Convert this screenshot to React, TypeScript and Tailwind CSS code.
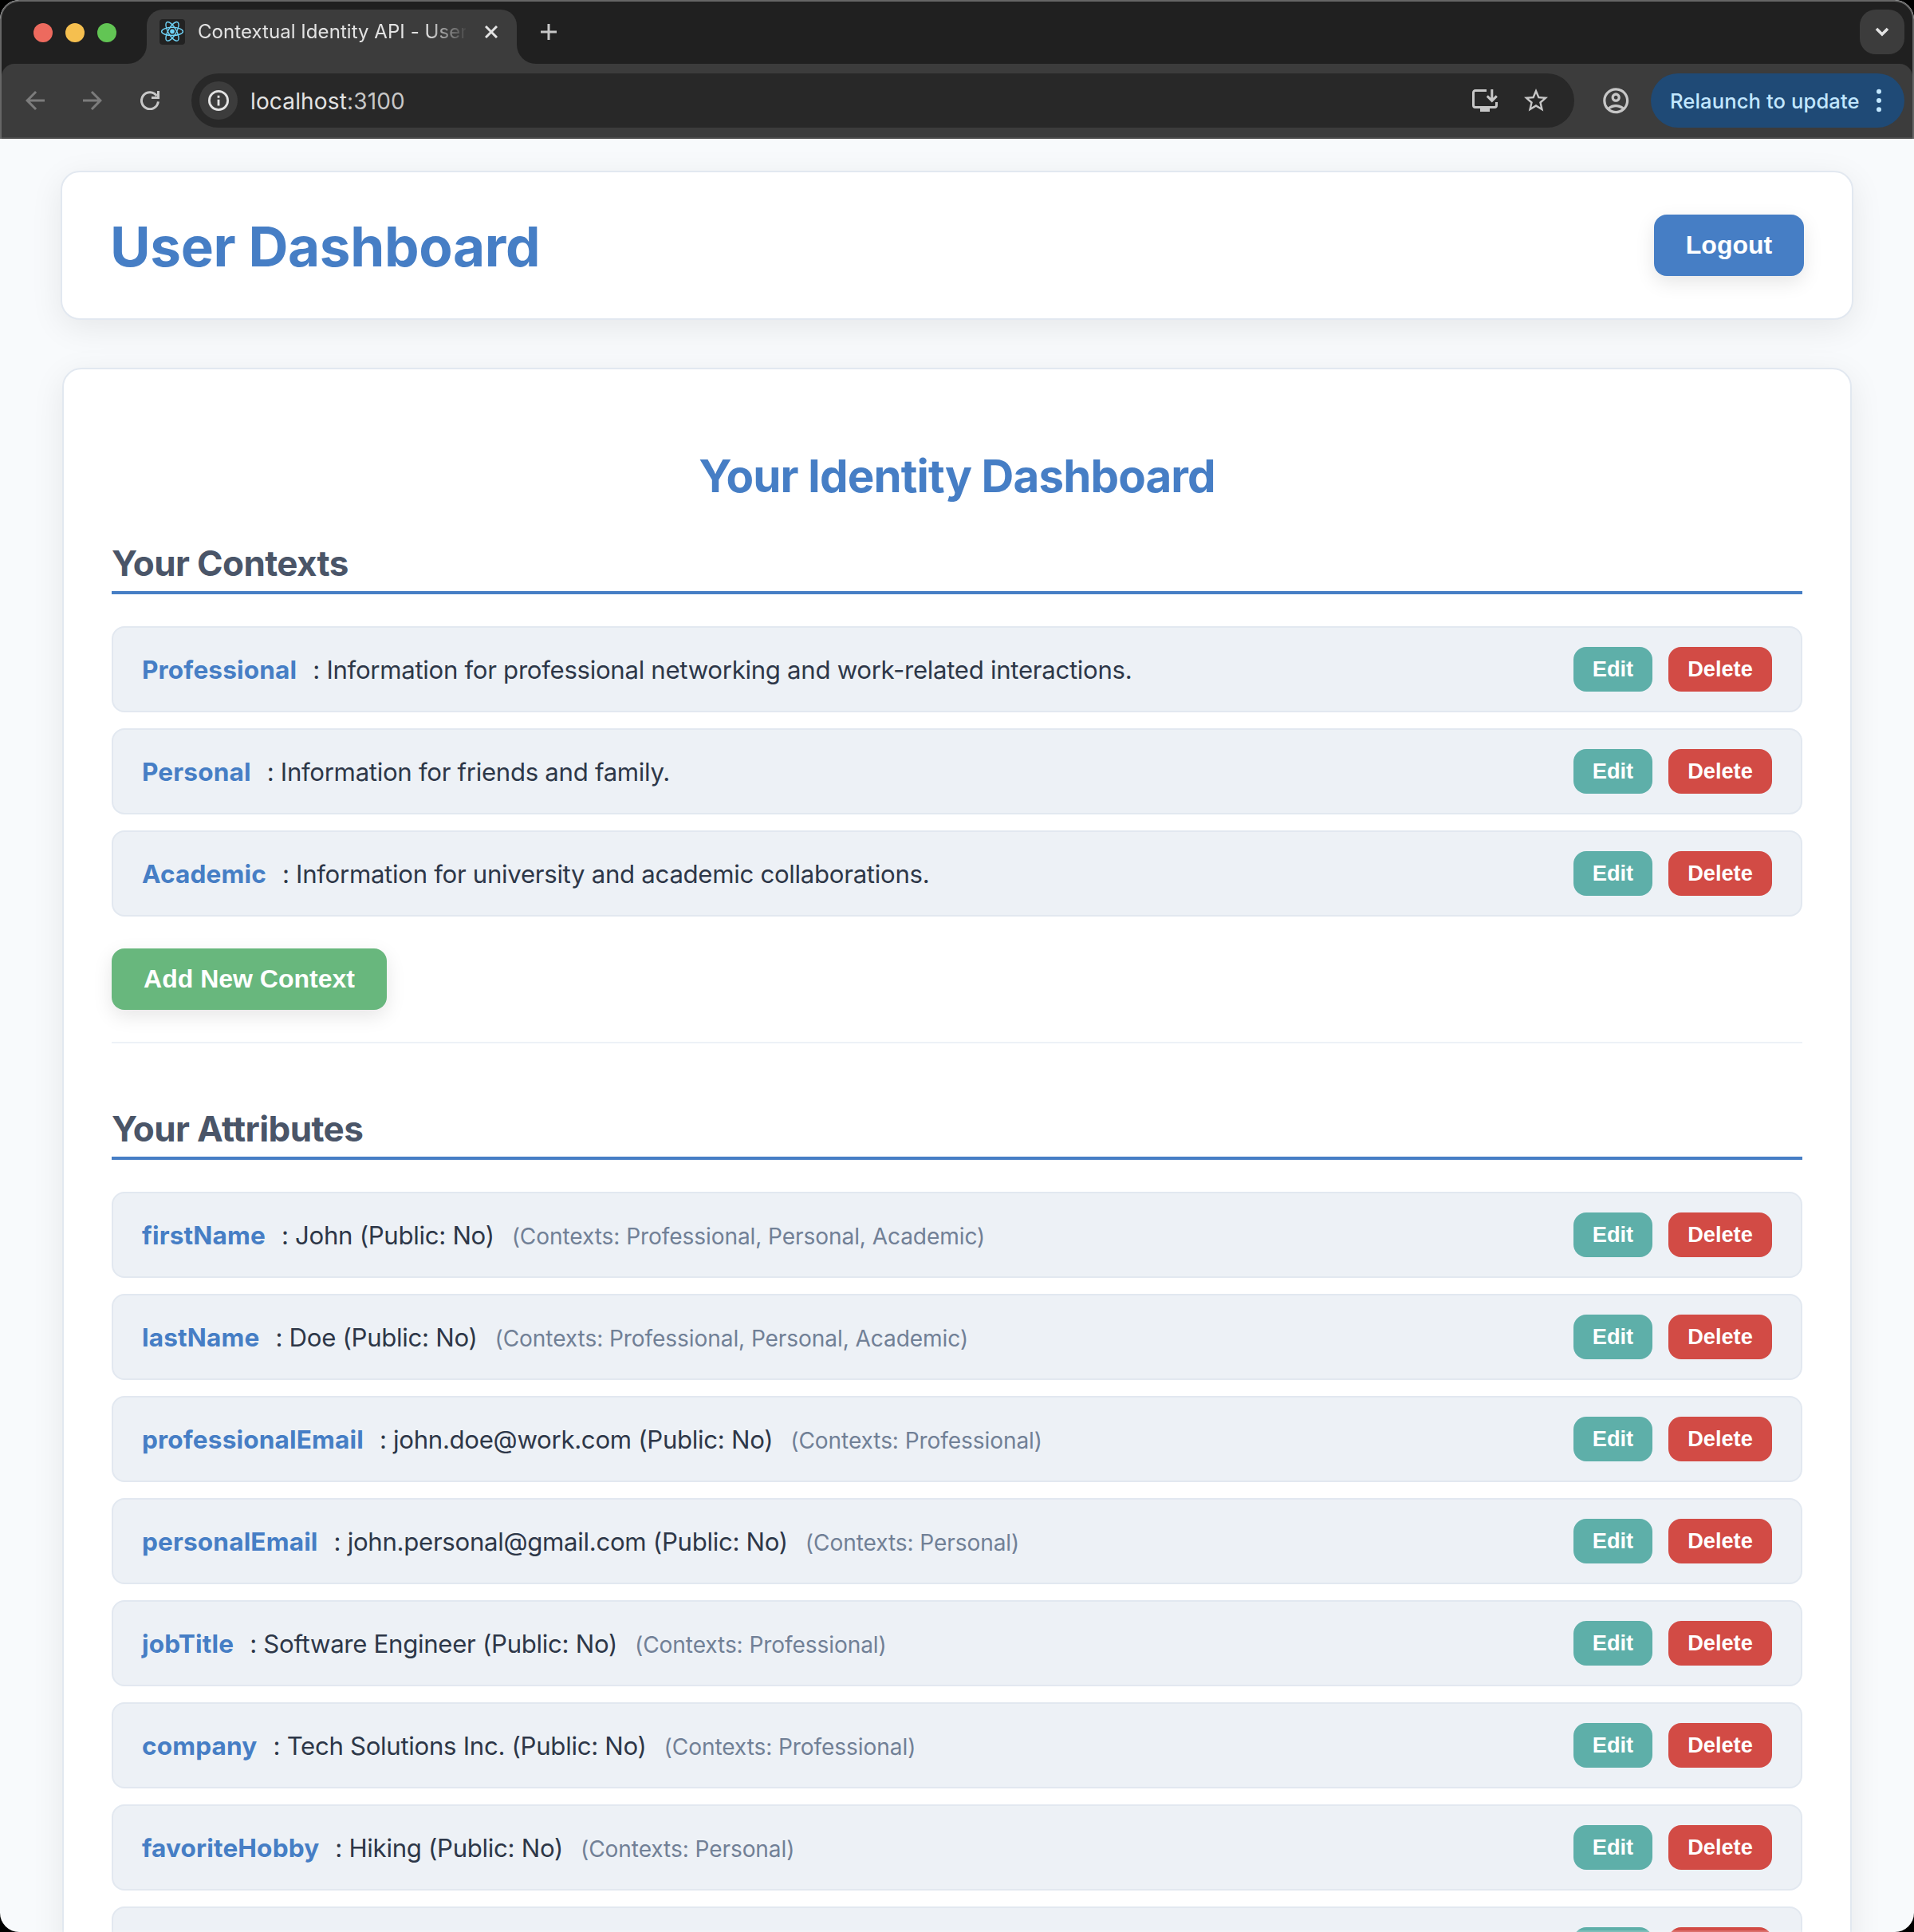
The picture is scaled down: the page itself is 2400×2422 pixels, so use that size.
import { MdArrowBack, MdArrowForward, MdOutlineAccountCircle, MdStarBorder } from 'react-icons/md';

type Attribute = { name: string; value: string; contexts: string };

const contexts = [
  { name: 'Professional', description: 'Information for professional networking and work-related interactions.' },
  { name: 'Personal', description: 'Information for friends and family.' },
  { name: 'Academic', description: 'Information for university and academic collaborations.' },
];

const attributes: Attribute[] = [
  { name: 'firstName', value: 'John', contexts: 'Professional, Personal, Academic' },
  { name: 'lastName', value: 'Doe', contexts: 'Professional, Personal, Academic' },
  { name: 'professionalEmail', value: 'john.doe@work.com', contexts: 'Professional' },
  { name: 'personalEmail', value: 'john.personal@gmail.com', contexts: 'Personal' },
  { name: 'jobTitle', value: 'Software Engineer', contexts: 'Professional' },
  { name: 'company', value: 'Tech Solutions Inc.', contexts: 'Professional' },
  { name: 'favoriteHobby', value: 'Hiking', contexts: 'Personal' },
];

function ReactLogo() {
  return (
    <span className="flex size-8 shrink-0 items-center justify-center rounded-[4px] bg-[#222222]">
      <svg viewBox="-16 -16 32 32" className="size-8" fill="none" stroke="#6fd3f7" strokeWidth="1.4">
        <g transform="translate(0 -0.6)">
          <circle r="2.8" fill="#6fd3f7" stroke="none" />
          <ellipse rx="13.4" ry="5.1" />
          <ellipse rx="13.4" ry="5.1" transform="rotate(60)" />
          <ellipse rx="13.4" ry="5.1" transform="rotate(120)" />
        </g>
      </svg>
    </span>
  );
}

function TabStrip() {
  return (
    <div className="flex h-[78px] items-end pr-[10px] pl-10">
      <div className="mb-[27px] flex w-[118px] gap-4">
        <span className="size-6 rounded-full bg-[#ed6a5e]" />
        <span className="size-6 rounded-full bg-[#f5bf4f]" />
        <span className="size-6 rounded-full bg-[#62c554]" />
      </div>
      <div className="size-6 bg-[#3c3c3c]">
        <div className="size-6 rounded-br-[24px] bg-[#202020]" />
      </div>
      <div className="flex h-[68px] w-[464px] items-start rounded-t-[20px] bg-[#3c3c3c] pt-3 pl-4">
        <ReactLogo />
        <span className="ml-4 w-[336px] overflow-hidden text-[24px] leading-[32px] tracking-[0.05px] whitespace-nowrap text-[#e3e3e3] [mask-image:linear-gradient(to_right,black_85%,transparent_101%)]">
          Contextual Identity API - User Dashboard
        </span>
        <svg viewBox="0 0 16 16" className="mt-2 ml-6 size-4" stroke="#e3e3e3" strokeWidth="3">
          <path d="M1 1l14 14M15 1L1 15" />
        </svg>
      </div>
      <div className="size-6 bg-[#3c3c3c]">
        <div className="size-6 rounded-bl-[24px] bg-[#202020]" />
      </div>
      <svg viewBox="0 0 20 20" className="mb-[30px] ml-[6px] size-5" stroke="#c7c7c7" strokeWidth="3">
        <path d="M10 0v20M0 10h20" />
      </svg>
      <div className="mb-3 ml-auto flex h-14 w-14 items-center justify-center rounded-[20px] bg-[#3c3c3c]">
        <svg viewBox="0 0 18 12" className="h-3 w-[18px]" fill="none" stroke="#e3e3e3" strokeWidth="3.6">
          <path d="M2 2l7 7 7-7" />
        </svg>
      </div>
    </div>
  );
}

function Toolbar() {
  return (
    <div className="flex h-[94px] items-center rounded-t-[16px] border-b-2 border-[#4a4a4a] bg-[#3c3c3c] pr-[10px] pl-6">
      <MdArrowBack className="size-9 text-[#7c7c7c]" />
      <MdArrowForward className="ml-9 size-9 text-[#7c7c7c]" />
      <svg viewBox="0 0 24 24" className="ml-[42px] size-6" fill="none" stroke="#c7c7c7" strokeWidth="3">
        <path d="M22.4 13.4A10.5 10.5 0 1 1 20.6 6.2" />
        <path d="M22.5 0v8.6H14" />
      </svg>
      <div className="ml-10 flex h-[68px] w-[1734px] items-center rounded-full bg-[#282828] pr-[30px] pl-[10px]">
        <span className="flex size-12 items-center justify-center rounded-full bg-[#3c3c3c]">
          <svg viewBox="0 0 26 26" className="size-[26px]" fill="none" stroke="#e3e3e3" strokeWidth="2.8">
            <circle cx="13" cy="13" r="11.6" />
            <path d="M13 11.8v7.6M13 6.8v2.9" />
          </svg>
        </span>
        <span className="ml-4 pt-px text-[28px] leading-9 tracking-[0.15px] text-[#e3e3e3]">
          localhost<span className="text-[#c7c7c7]">:3100</span>
        </span>
        <svg viewBox="0 0 32 28" className="ml-auto h-7 w-8" fill="none" stroke="#c7c7c7" strokeWidth="3">
          <path d="M18 1.5H4A2.5 2.5 0 0 0 1.5 4v16A2.5 2.5 0 0 0 4 22.5h24a2.5 2.5 0 0 0 2.5-2.5v-4" />
          <path d="M24.8 0v14M18.8 8.4l6 6 6-6" />
          <path d="M10 23h12v5H10z" fill="#c7c7c7" stroke="none" />
        </svg>
        <MdStarBorder className="ml-[30px] size-9 text-[#c7c7c7]" />
      </div>
      <MdOutlineAccountCircle className="ml-[33px] size-[38.4px] text-[#c7c7c7]" />
      <div className="ml-auto flex h-[68px] w-[318px] items-center rounded-full bg-[#1f4a76] pl-6">
        <span className="pt-px text-[25.6px] font-[450] leading-9 tracking-[0.1px] whitespace-nowrap text-[#c2e7ff]">
          Relaunch to update
        </span>
        <svg viewBox="0 0 6 30" className="ml-auto mr-[29px] h-[30px] w-[6px]" fill="#c2e7ff">
          <circle cx="3" cy="3.8" r="3" />
          <circle cx="3" cy="15" r="3" />
          <circle cx="3" cy="26.2" r="3" />
        </svg>
      </div>
    </div>
  );
}

function RowActions() {
  return (
    <div className="ml-auto flex gap-5 font-['Liberation_Sans',Arial,sans-serif] text-[27.2px] leading-[56px] font-bold text-white">
      <button className="h-14 w-[99px] rounded-[16px] bg-[#5eafa9]">Edit</button>
      <button className="h-14 w-[130px] rounded-[16px] bg-[#d24b45]">Delete</button>
    </div>
  );
}

const rowClass =
  'flex h-[108px] items-center rounded-[16px] border-2 border-[#e2e8f0] bg-[#edf1f6] px-9 whitespace-nowrap';
const nameClass = 'pt-[2px] text-[31.6px] font-[650] leading-[50px] tracking-[0.14px] text-[#467ec5]';
const textClass = 'pt-[2px] ml-5 text-[31.2px] leading-[50px] tracking-[-0.31px] text-[#2d3748]';
const sectionTitle =
  'border-b-4 border-[#467ec5] pb-2 text-[44px] font-bold leading-[54px] tracking-[-0.6px] text-[#4a5568]';
const actionButton =
  "h-[77px] rounded-[16px] font-['Liberation_Sans',Arial,sans-serif] text-[32px] leading-[77px] font-bold text-white shadow-[0_8px_24px_rgba(0,0,0,0.1)]";

export default function App() {
  return (
    <div className="h-[2422px] w-[2400px] overflow-hidden bg-black font-['Inter',sans-serif]">
      <div className="relative flex h-full flex-col overflow-hidden rounded-[24px] bg-[#f8fafc]">
        <header className="h-[174px] shrink-0 rounded-t-[24px] border-x-2 border-t-2 border-[#666666] bg-[#202020]">
          <TabStrip />
          <Toolbar />
        </header>

        <main className="flex min-h-0 flex-1 flex-col overflow-hidden px-[76px] pt-10">
          <section className="flex h-[187px] shrink-0 items-center justify-between rounded-[24px] border-2 border-[#e2e8f0] bg-white px-[60px] shadow-[0_10px_40px_rgba(0,0,0,0.08)]">
            <h1 className="pt-[2px] text-[69.2px] leading-[84px] font-bold tracking-[-0.35px] text-[#467ec5]">
              User Dashboard
            </h1>
            <button className={`${actionButton} w-[188px] bg-[#467ec5]`}>Logout</button>
          </section>

          <section className="mx-[2px] mt-[60px] h-[2200px] shrink-0 rounded-[24px] border-2 border-[#e2e8f0] bg-white px-[60px] pt-[99px] shadow-[0_10px_40px_rgba(0,0,0,0.08)]">
            <h2 className="text-center text-[56.5px] leading-[70px] font-bold tracking-[-0.9px] text-[#467ec5]">
              Your Identity Dashboard
            </h2>

            <h3 className={`${sectionTitle} mt-[47px]`}>Your Contexts</h3>
            <div className="mt-10 flex flex-col gap-5">
              {contexts.map((context) => (
                <div key={context.name} className={rowClass}>
                  <span className={nameClass}>{context.name}</span>
                  <span className={textClass}>: {context.description}</span>
                  <RowActions />
                </div>
              ))}
            </div>
            <button className={`${actionButton} mt-10 block w-[345px] bg-[#68b77d]`}>Add New Context</button>

            <hr className="mt-10 border-t-2 border-[#edf2f7]" />

            <h3 className={`${sectionTitle} mt-20`}>Your Attributes</h3>
            <div className="mt-10 flex flex-col gap-5">
              {attributes.map((attribute) => (
                <div key={attribute.name} className={rowClass}>
                  <span className={nameClass}>{attribute.name}</span>
                  <span className={textClass}>: {attribute.value} (Public: No)</span>
                  <span className="ml-[22px] pt-1 text-[28.1px] leading-[50px] tracking-[-0.1px] text-[#718096]">
                    (Contexts: {attribute.contexts})
                  </span>
                  <RowActions />
                </div>
              ))}
              <div className={rowClass}>
                <RowActions />
              </div>
            </div>
          </section>
        </main>
        <div className="absolute inset-x-0 bottom-0 h-[2px] bg-white/20" />
      </div>
    </div>
  );
}
